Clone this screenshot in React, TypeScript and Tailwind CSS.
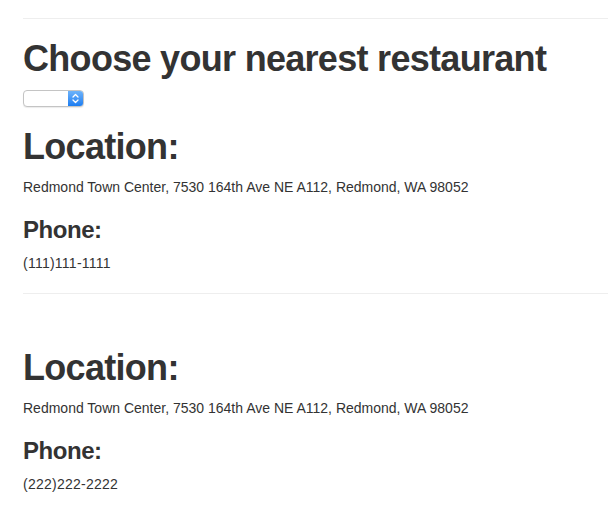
import React from "react";

function FakeSelect() {
  return (
    <div className="relative mt-[11px] flex h-[17px] w-[61px] overflow-hidden rounded-[4px] border border-[#c4c4c4] bg-white shadow-[0_1px_1px_rgba(0,0,0,0.08)]">
      <div className="flex-1" />
      <div className="flex w-[15px] items-center justify-center bg-gradient-to-b from-[#6cb3fa] to-[#1a7df1]">
        <svg width="7" height="11" viewBox="0 0 7 11" fill="none">
          <path d="M1 4 L3.5 1.5 L6 4" stroke="white" strokeWidth="1.3" strokeLinecap="round" strokeLinejoin="round" />
          <path d="M1 7 L3.5 9.5 L6 7" stroke="white" strokeWidth="1.3" strokeLinecap="round" strokeLinejoin="round" />
        </svg>
      </div>
    </div>
  );
}

function Block({ phone, first }: { phone: string; first?: boolean }) {
  return (
    <div>
      <h1
        className={`${first ? "mt-[20px]" : "mt-[54px]"} mb-[10px] text-[36px] leading-[40px] font-bold tracking-[-0.7px] text-[#333]`}
      >
        Location:
      </h1>
      <p className="mb-[10px] text-[14px] leading-[20px] text-[#333]">
        Redmond Town Center, 7530 164th Ave NE A112, Redmond, WA 98052
      </p>
      <h3 className="mt-[20px] mb-[10px] text-[24px] leading-[26px] font-bold tracking-[-0.45px] text-[#333]">
        Phone:
      </h3>
      <p className="mb-[10px] text-[14px] leading-[20px] tracking-[0.25px] text-[#333]">{phone}</p>
    </div>
  );
}

export default function App() {
  return (
    <div
      className="min-h-[505px] bg-white pl-[23px] pt-[18px]"
      style={{ fontFamily: '"Liberation Sans", Arial, Helvetica, sans-serif' }}
    >
      <hr className="border-0 border-t border-[#eee]" />
      <h1 className="mt-[20px] text-[36px] leading-[40px] font-bold tracking-[-0.7px] text-[#333]">
        Choose your nearest restaurant
      </h1>
      <FakeSelect />
      <Block phone="(111)111-1111" first />
      <hr className="mt-[20px] border-0 border-t border-[#eee]" />
      <Block phone="(222)222-2222" />
    </div>
  );
}
